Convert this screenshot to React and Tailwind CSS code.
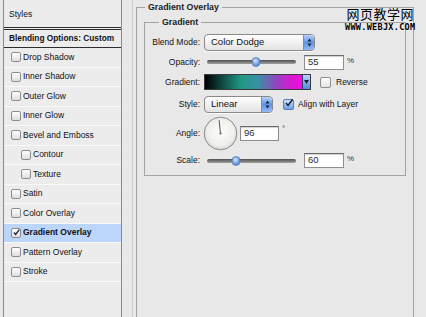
import React from 'react';

const styleRows = [
  { label: 'Drop Shadow' },
  { label: 'Inner Shadow' },
  { label: 'Outer Glow' },
  { label: 'Inner Glow' },
  { label: 'Bevel and Emboss' },
  { label: 'Contour', indent: true },
  { label: 'Texture', indent: true },
  { label: 'Satin' },
  { label: 'Color Overlay' },
  { label: 'Gradient Overlay', active: true },
  { label: 'Pattern Overlay' },
  { label: 'Stroke' },
];

function Box({ checked }) {
  return (
    <span className="w-[10px] h-[10px] shrink-0 rounded-[2px] border border-[#8d8d8d] bg-gradient-to-b from-white to-[#dedede] flex items-center justify-center overflow-visible">
      {checked && (
        <svg width="11" height="11" viewBox="0 0 11 11" className="-mt-[1px] ml-[1px]">
          <path d="M1.5 5.5 L4.2 8.5 L10 1" fill="none" stroke="#1b2540" strokeWidth="2.2" />
        </svg>
      )}
    </span>
  );
}

function Stepper() {
  return (
    <span className="w-[11px] h-full rounded-r-[4px] bg-gradient-to-b from-[#b9d4fa] via-[#5e95e6] to-[#8fb8f2] border-l border-[#6f8fc0] flex items-center justify-center">
      <svg width="5" height="9" viewBox="0 0 5 9">
        <path d="M2.5 0.5 L4.5 3.5 L0.5 3.5 Z M2.5 8.5 L4.5 5.5 L0.5 5.5 Z" fill="#1c2438" />
      </svg>
    </span>
  );
}

function Select({ value, width }) {
  return (
    <div
      className={`h-[17px] ${width} rounded-[4px] border border-[#8a8a8a] bg-gradient-to-b from-white to-[#e3e3e3] flex items-center justify-between shadow-[0_1px_0_#fafafa] overflow-hidden`}
    >
      <span className="pl-[6px] text-[9.5px] leading-none text-[#111]">{value}</span>
      <Stepper />
    </div>
  );
}

function Slider({ pos }) {
  return (
    <div className="relative ml-[3px] w-[89px] h-[4px] rounded-full bg-gradient-to-b from-[#4e4e4e] to-[#a2a2a2]">
      <span
        className="absolute top-1/2 -translate-y-1/2 -translate-x-1/2 w-[9px] h-[10px] rounded-full border border-[#5d84c0] bg-[radial-gradient(circle_at_40%_35%,#d6e6ff,#6b9be0_60%,#3f6fbf)]"
        style={{ left: pos }}
      />
    </div>
  );
}

function Field({ value, width = 'w-[40px]' }) {
  return (
    <div className={`${width} h-[15px] bg-white border border-[#8e8e8e] border-t-[#6a6a6a] shadow-[inset_0_1px_1px_#cfcfcf] flex items-center pl-[3px] text-[9.5px] text-[#2a2a2a]`}>
      {value}
    </div>
  );
}

function Label({ children }) {
  return <span className="w-[55px] text-right text-[8.5px] text-[#111] shrink-0">{children}</span>;
}

export default function App() {
  return (
    <div className="relative w-[426px] h-[317px] overflow-hidden bg-[#e8e8e8] flex font-['Liberation_Sans',Arial,sans-serif] text-[#111]">
      {/* Styles list */}
      <div className="ml-[3px] w-[119px] h-full shrink-0 border-x border-[#8a8a8a] bg-[#ececec] flex flex-col">
        <div className="h-[27px] flex items-center pl-[5px] text-[8.5px] pt-[1px]">Styles</div>
        <div className="h-[3px] border-y border-[#2e2e2e]" />
        <div className="h-[18px] border-b border-[#2e2e2e] flex items-center pl-[5px] text-[8.3px] font-bold">
          Blending Options: Custom
        </div>
        {styleRows.map((r) => (
          <div
            key={r.label}
            className={`h-[19.5px] shrink-0 flex items-center gap-[2px] border-b border-[#f9f9f9] text-[8.5px] ${
              r.indent ? 'pl-[17px]' : 'pl-[7px]'
            } ${r.active ? 'bg-[#bcd6fb] font-bold' : ''}`}
          >
            <Box checked={r.active} />
            <span>{r.label}</span>
          </div>
        ))}
      </div>

      {/* divider */}
      <div className="ml-[10px] w-[1px] h-full bg-[#cdcdcd] shrink-0" />

      {/* Gradient Overlay group */}
      <fieldset className="ml-[3px] w-[278px] h-[340px] shrink-0 border border-[#a3a3a3]">
        <legend className="ml-[8px] px-[3px] text-[8.8px] leading-[14px] font-bold text-[#222]">Gradient Overlay</legend>

        <fieldset className="mt-[1px] ml-[7px] w-[262px] h-[161px] border border-[#a3a3a3]">
          <legend className="ml-[14px] px-[3px] text-[8.8px] leading-[14px] font-bold text-[#222]">Gradient</legend>

          <div className="flex flex-col">
            {/* Blend Mode */}
            <div className="mt-[4px] h-[18px] flex items-center gap-[4px]">
              <Label>Blend Mode:</Label>
              <Select value="Color Dodge" width="w-[111px]" />
            </div>

            {/* Opacity */}
            <div className="mt-[3px] h-[16px] flex items-center">
              <Label>Opacity:</Label>
              <span className="w-[4px]" />
              <Slider pos={49} />
              <span className="w-[8px]" />
              <Field value="55" />
              <span className="ml-[3px] text-[8px] -mt-[3px] text-[#333]">%</span>
            </div>

            {/* Gradient */}
            <div className="mt-[4px] h-[16px] flex items-center">
              <Label>Gradient:</Label>
              <div className="ml-[4px] w-[107px] h-[16px] border border-[#3a3a3a] flex">
                <div className="flex-1 bg-[linear-gradient(to_right,#000_0%,#0f3e38_15%,#1f9a86_38%,#3b8fa6_55%,#9a3fc2_75%,#e311d6_92%,#f010e0_100%)]" />
                <div className="w-[8px] bg-gradient-to-b from-[#b9d4fa] to-[#4f88de] border-l border-[#2b3f66] flex items-center justify-center">
                  <svg width="5" height="4" viewBox="0 0 5 4">
                    <path d="M0 0 L5 0 L2.5 4 Z" fill="#14203a" />
                  </svg>
                </div>
              </div>
              <span className="ml-[9px] w-[11px] h-[11px] rounded-[2px] border border-[#8d8d8d] bg-gradient-to-b from-white to-[#e2e2e2]" />
              <span className="ml-[5px] text-[8.5px]">Reverse</span>
            </div>

            {/* Style */}
            <div className="mt-[6px] h-[16px] flex items-center gap-[4px]">
              <Label>Style:</Label>
              <Select value="Linear" width="w-[69px]" />
              <span className="ml-[6px] w-[11px] h-[11px] rounded-[2px] border border-[#5a7cb2] bg-gradient-to-b from-[#cfe1fc] to-[#6f9fe6] flex items-center justify-center">
                <svg width="10" height="10" viewBox="0 0 10 10" className="-mt-[2px] ml-[1px]">
                  <path d="M1.2 5 L3.8 8 L9.5 0.5" fill="none" stroke="#14203d" strokeWidth="1.9" />
                </svg>
              </span>
              <span className="ml-[0px] text-[8.5px]">Align with Layer</span>
            </div>

            {/* Angle */}
            <div className="mt-[4px] h-[34px] flex items-center">
              <Label>Angle:</Label>
              <svg width="35" height="35" viewBox="0 0 35 35" className="ml-[3px] shrink-0">
                <defs>
                  <radialGradient id="dial" cx="50%" cy="45%" r="60%">
                    <stop offset="0%" stopColor="#fdfdfb" />
                    <stop offset="70%" stopColor="#eeeeea" />
                    <stop offset="100%" stopColor="#cfcfcb" />
                  </radialGradient>
                </defs>
                <circle cx="17.5" cy="17.5" r="16.3" fill="url(#dial)" stroke="#8b8b8b" strokeWidth="1" />
                <line x1="17.5" y1="17.5" x2="16.1" y2="4.2" stroke="#555" strokeWidth="1" />
                <circle cx="17.5" cy="17.5" r="1.1" fill="#666" />
              </svg>
              <span className="w-[2px]" />
              <Field value="96" width="w-[39px]" />
              <span className="ml-[3px] text-[8px] -mt-[9px] text-[#333]">°</span>
            </div>

            {/* Scale */}
            <div className="mt-[3px] h-[15px] flex items-center">
              <Label>Scale:</Label>
              <span className="w-[4px]" />
              <Slider pos={29} />
              <span className="w-[8px]" />
              <Field value="60" />
              <span className="ml-[3px] text-[8px] -mt-[3px] text-[#333]">%</span>
            </div>
          </div>
        </fieldset>
      </fieldset>

      {/* watermark */}
      <div className="absolute left-[345px] top-[7px] flex flex-col items-center">
        <span className="text-[13px] leading-[14px] text-black font-['Noto_Sans_CJK_SC','Noto_Sans_CJK_JP',sans-serif] tracking-[0.5px]">网页教学网</span>
        <span className="mt-[2px] text-[8.5px] leading-[9px] font-bold text-black font-['DejaVu_Sans_Mono',monospace] tracking-[0.3px]">WWW.WEBJX.COM</span>
      </div>
    </div>
  );
}
